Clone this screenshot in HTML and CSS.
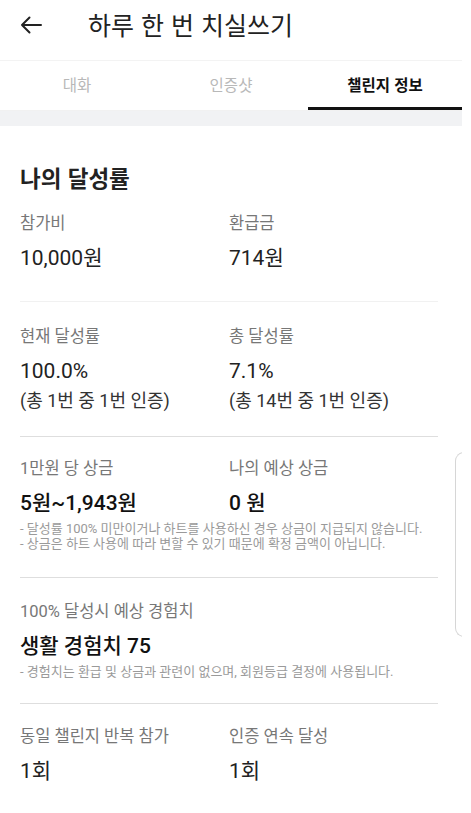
FILE: index.html
```html
<!DOCTYPE html>
<html lang="ko">
<head>
  <meta charset="utf-8">
  <title>하루 한 번 치실쓰기</title>
  <link rel="stylesheet" href="styles.css">
</head>
<body>
  <div class="page">
    <!-- Top bar -->
    <header class="top-bar">
      <span class="back-btn">
        <svg width="22" height="18" viewBox="0 0 22 18" fill="none" stroke="#222" stroke-width="2" stroke-linecap="round" stroke-linejoin="round">
          <path d="M21 9H2M9.5 1.5L2 9l7.5 7.5"/>
        </svg>
      </span>
      <h1 class="title">하루 한 번 치실쓰기</h1>
    </header>

    <!-- Tabs -->
    <nav class="tabs">
      <div class="tab">대화</div>
      <div class="tab">인증샷</div>
      <div class="tab active">챌린지 정보</div>
    </nav>
    <div class="band"></div>

    <!-- Info -->
    <main class="info">
      <h2 class="info-title">나의 달성률</h2>

      <section class="stat-block first">
        <div class="stat">
          <div class="label">참가비</div>
          <div class="value">10,000원</div>
        </div>
        <div class="stat">
          <div class="label">환급금</div>
          <div class="value">714원</div>
        </div>
      </section>

      <section class="stat-block second">
        <div class="stat">
          <div class="label">현재 달성률</div>
          <div class="value">100.0%</div>
          <div class="sub">(총 1번 중 1번 인증)</div>
        </div>
        <div class="stat">
          <div class="label">총 달성률</div>
          <div class="value">7.1%</div>
          <div class="sub">(총 14번 중 1번 인증)</div>
        </div>
      </section>

      <section class="stat-block third">
        <div class="stat">
          <div class="label">1만원 당 상금</div>
          <div class="value strong">5원~1,943원</div>
        </div>
        <div class="stat">
          <div class="label">나의 예상 상금</div>
          <div class="value strong">0 원</div>
        </div>
        <p class="note">- 달성률 100% 미만이거나 하트를 사용하신 경우 상금이 지급되지 않습니다.<br>- 상금은 하트 사용에 따라 변할 수 있기 때문에 확정 금액이 아닙니다.</p>
      </section>

      <section class="stat-block fourth">
        <div class="stat wide">
          <div class="label">100% 달성시 예상 경험치</div>
          <div class="value strong">생활 경험치 75</div>
        </div>
        <p class="note">- 경험치는 환급 및 상금과 관련이 없으며, 회원등급 결정에 사용됩니다.</p>
      </section>

      <section class="stat-block last">
        <div class="stat">
          <div class="label">동일 챌린지 반복 참가</div>
          <div class="value">1회</div>
        </div>
        <div class="stat">
          <div class="label">인증 연속 달성</div>
          <div class="value">1회</div>
        </div>
      </section>
    </main>

    <!-- edge panel handle -->
    <div class="edge-handle"></div>
  </div>
</body>
</html>
```

FILE: styles.css
```css
body {
  margin: 0;
  background-color: #ffffff;
  font-family: Roboto, "Noto Sans CJK KR", sans-serif;
  color: #222222;
}

.page {
  position: relative;
  width: 462px;
  height: 813px;
  overflow: hidden;
}

/* Top bar */
.top-bar {
  display: flex;
  align-items: center;
  height: 32px;
  padding: 8px 0 20px 20px;
}

.back-btn {
  display: flex;
  width: 22px;
  margin-right: 46px;
  margin-top: 2px;
}

.title {
  margin: 0;
  font-family: "Noto Sans CJK KR", sans-serif;
  font-size: 25px;
  font-weight: 400;
  color: #222222;
  line-height: 32px;
}

/* Tabs */
.tabs {
  display: flex;
  border-top: 1px solid #f3f3f3;
  border-bottom: 1px solid #f1f1f1;
}

.tab {
  flex: 1;
  box-sizing: border-box;
  height: 49px;
  padding-top: 11px;
  line-height: 24px;
  text-align: center;
  font-family: "Noto Sans CJK KR", sans-serif;
  font-size: 15.5px;
  color: #b8b8b8;
  border-bottom: 3px solid transparent;
}

.tab.active {
  color: #111111;
  font-weight: 700;
  border-bottom-color: #111111;
}

.band {
  height: 15px;
  background-color: #f1f2f4;
}

/* Info */
.info {
  padding: 36px 24px 0 20px;
}

.info-title {
  margin: 0;
  font-family: "Noto Sans CJK KR", sans-serif;
  font-size: 22.5px;
  font-weight: 700;
  line-height: 30px;
  color: #222222;
}

.stat-block {
  display: grid;
  grid-template-columns: 209px 209px;
  padding: 21px 0 24px;
  border-bottom: 1px solid #dedede;
}

.stat-block.first {
  padding-top: 20px;
  padding-bottom: 28px;
  border-bottom-color: #f1f1f1;
}

.stat-block.second {
  padding-top: 23px;
  padding-bottom: 20px;
}

.stat-block.third {
  padding-top: 20px;
  padding-bottom: 26px;
}

.stat-block.fourth {
  padding-top: 22px;
}

.stat-block.last {
  border-bottom: none;
}

.stat.wide {
  grid-column: 1 / 3;
}

.label {
  font-size: 16.5px;
  line-height: 24px;
  color: #777777;
}

.value {
  margin-top: 7px;
  font-size: 21px;
  line-height: 30px;
  color: #222222;
}

.value.strong {
  font-weight: 500;
  color: #111111;
}

.sub {
  font-size: 18px;
  line-height: 30px;
  color: #333333;
}

.note {
  grid-column: 1 / 3;
  margin: 3px 0 0;
  font-size: 13px;
  line-height: 15px;
  color: #9a9a9a;
}

.edge-handle {
  position: absolute;
  left: 455px;
  top: 452px;
  width: 10px;
  height: 185px;
  box-sizing: border-box;
  border: 1.5px solid #d6d6d6;
  border-right: none;
  border-radius: 9px 0 0 9px;
}
```
